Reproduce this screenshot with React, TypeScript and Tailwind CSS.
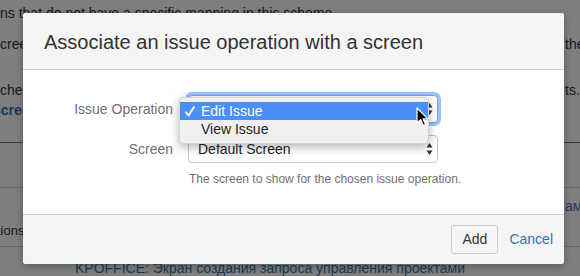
import React from "react";

function SelectArrows() {
  return (
    <svg width="7" height="14" viewBox="0 0 7 14" className="shrink-0">
      <path d="M3.5 1 L6.5 5.5 L0.5 5.5 Z" fill="#333" />
      <path d="M3.5 13 L6.5 8.5 L0.5 8.5 Z" fill="#333" />
    </svg>
  );
}

function Check() {
  return (
    <svg width="10" height="11" viewBox="0 0 10 11">
      <path d="M1 6.2 L3.6 9.6 L9 1" fill="none" stroke="#fff" strokeWidth="1.8" strokeLinecap="round" strokeLinejoin="round" />
    </svg>
  );
}

function Cursor() {
  return (
    <svg width="13" height="20" viewBox="0 0 13 20">
      <path
        d="M1 1 L1 16 L4.6 12.6 L7.2 18.6 L9.6 17.6 L7 11.8 L11.8 11.8 Z"
        fill="#000"
        stroke="#fff"
        strokeWidth="1.2"
        strokeLinejoin="round"
      />
    </svg>
  );
}

export default function App() {
  return (
    <div className="relative w-[580px] h-[276px] overflow-hidden bg-white font-['Liberation_Sans',Arial,sans-serif] text-[14px] text-[#333]">
      {/* page behind the dialog */}
      <div className="-ml-[7px] flex flex-col whitespace-nowrap leading-[20px]">
        <div className="mt-[3px] h-[20px] pl-[7px]">ns that do not have a specific mapping in this scheme.</div>
        <div className="mt-[11px] h-[20px] flex">
          <span className="w-[572px] shrink-0">screens for each operation, or use the default screen for all of them in the</span>
          <span>the</span>
        </div>
        <div className="mt-[26px] h-[20px] flex">
          <span className="w-[572px] shrink-0">schemes are used by issue type screen schemes associated with projects.</span>
          <span>ts.</span>
        </div>
        <div className="h-[20px] font-bold text-[#3572b0]">screen scheme</div>
        <div className="mt-[22px] h-px w-[600px] bg-[#5a7ca0]" />
        <div className="mt-[44px] h-px w-[600px] bg-[#cccccc]" />
        <div className="mt-[8px] h-[20px] flex">
          <span className="w-[572px] shrink-0" />
          <span className="text-[#3572b0]">ами</span>
        </div>
        <div className="mt-[5px] h-[20px] pl-[4px] text-[13px]">tions</div>
        <div className="mt-[5px] h-px w-[600px] bg-[#cccccc]" />
        <div className="mt-[11px] h-[20px] pl-[82px] text-[#3572b0]">KPOFFICE: Экран создания запроса управления проектами</div>
      </div>

      {/* blanket */}
      <div className="absolute inset-0 bg-black/50" />

      {/* dialog */}
      <div className="absolute left-[23px] top-[13px] w-[541px] h-[251px] flex flex-col rounded-[3px] bg-white shadow-[0_2px_8px_rgba(0,0,0,0.3)] overflow-hidden">
        <div className="h-[57px] shrink-0 flex items-center pl-[21px] bg-[#f5f5f5] border-b border-[#cccccc]">
          <h2 className="text-[20px] leading-[24px] text-[#333] mt-[2px]">Associate an issue operation with a screen</h2>
        </div>

        <div className="flex-1 pt-[25px]">
          <div className="flex items-center">
            <label className="w-[150px] text-right text-[#707070]">Issue Operation</label>
            <div className="ml-[15px] w-[250px] h-[28px] flex items-center justify-between pl-[9px] pr-[4px] rounded-[4px] border border-[#6ea2f5] bg-white ring-[3px] ring-[#9cc2fb]">
              <span>Edit Issue</span>
              <SelectArrows />
            </div>
          </div>
          <div className="mt-[12px] flex items-center">
            <label className="w-[150px] text-right text-[#707070]">Screen</label>
            <div className="ml-[15px] w-[250px] h-[28px] flex items-center justify-between pl-[9px] pr-[4px] rounded-[4px] border border-[#c8c8c8] bg-white">
              <span className="text-[#222]">Default Screen</span>
              <SelectArrows />
            </div>
          </div>
          <p className="mt-[8px] pl-[166px] text-[12px] leading-[16px] text-[#707070]">
            The screen to show for the chosen issue operation.
          </p>
        </div>

        <div className="h-[50px] shrink-0 flex items-center justify-end gap-[11px] pr-[11px] bg-[#f5f5f5] border-t border-[#cccccc]">
          <button className="h-[29px] px-[10px] rounded-[3px] border border-[#cccccc] bg-[#f5f5f5] text-[#333]">Add</button>
          <a className="text-[#3572b0]">Cancel</a>
        </div>
      </div>

      {/* open native menu */}
      <div className="absolute left-[179px] top-[97px] w-[250px] flex flex-col pt-[4px] pb-[5px] rounded-[5px] bg-[#f0f0f0] border border-[#d4d4d4] shadow-[0_3px_10px_rgba(0,0,0,0.3)]">
        <div className="h-[18px] flex items-center bg-[#4a8ff5] text-white">
          <span className="w-[21px] pl-[5px] flex items-center"><Check /></span>
          <span>Edit Issue</span>
        </div>
        <div className="h-[18px] flex items-center text-[#222]">
          <span className="w-[21px]" />
          <span>View Issue</span>
        </div>
      </div>

      {/* mouse pointer */}
      <div className="absolute left-[416px] top-[107px]">
        <Cursor />
      </div>
    </div>
  );
}
